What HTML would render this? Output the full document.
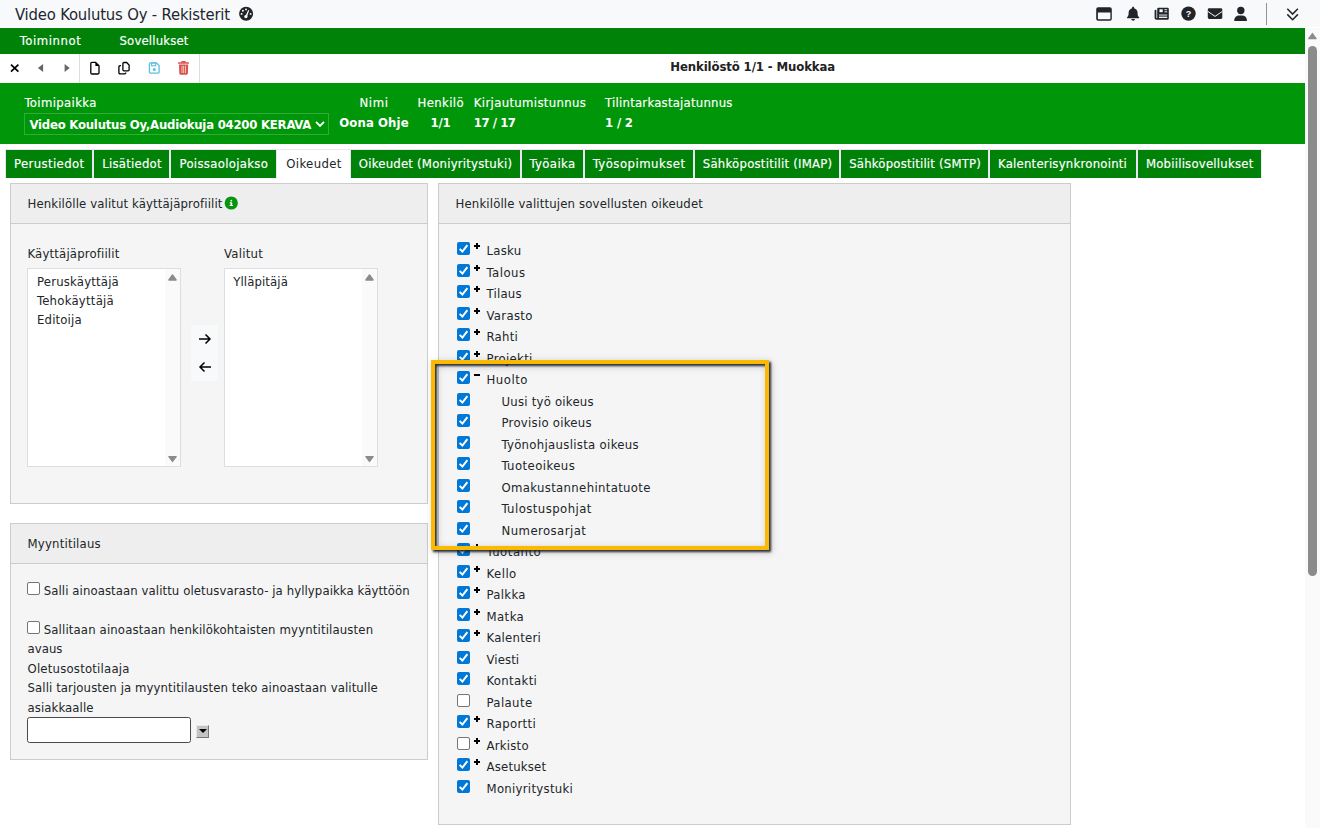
<!DOCTYPE html>
<html lang="fi">
<head>
<meta charset="utf-8">
<title>Video Koulutus Oy - Rekisterit</title>
<style>
*{box-sizing:border-box;margin:0;padding:0}
html,body{width:1320px;height:828px;overflow:hidden;background:#fff}
body{font-family:"DejaVu Sans Condensed","Liberation Sans",sans-serif;font-size:13px;color:#333;position:relative}
.a{position:absolute}
.t{position:absolute;white-space:nowrap;line-height:1}
#topbar{left:0;top:0;width:1320px;height:28px;background:#f8f9fa;border-bottom:1px solid #fff}
#menubar{left:0;top:28px;width:1305px;height:26px;background:#008209}
#toolbar{left:0;top:54px;width:1305px;height:29px;background:#fff}
.sep{position:absolute;top:54px;width:1px;height:29px;background:#dcdce4}
#infobar{left:0;top:83px;width:1305px;height:61px;background:#009609}
#sel{left:24px;top:113px;width:305px;height:22px;border:1px solid rgba(255,255,255,.2)}
.tab{position:absolute;top:150px;height:28px;background:#008209}
.tab.act{background:#fff}
#tabline{left:5px;top:149px;width:1257px;height:29px;background:#e9e6f1}
.panel{position:absolute;background:#f5f5f5;border:1px solid #ccc}
.phead{position:absolute;left:0;top:0;right:0;height:40px;background:#eee;border-bottom:1px solid #ccc}
.lb{position:absolute;background:#fff;border:1px solid #dcdee3}
.lbs{position:absolute;right:0;top:0;bottom:0;width:15px;background:#fafafa}
.tri-u{position:absolute;width:0;height:0;border-left:5px solid transparent;border-right:5px solid transparent;border-bottom:6px solid #8b8b8b}
.tri-d{position:absolute;width:0;height:0;border-left:5px solid transparent;border-right:5px solid transparent;border-top:6px solid #8b8b8b}
.cb{position:absolute;width:13px;height:13px;border-radius:2px}
.cb.on{background:#0078d7}
.cb.off{background:#fff;border:1px solid #767676}
.cb svg{position:absolute;left:0;top:0}
.pl{position:absolute;width:6px;height:6px}
.pl:before{content:"";position:absolute;left:0;top:2px;width:6px;height:2px;background:#000}
.pl.p:after{content:"";position:absolute;left:2px;top:0;width:2px;height:6px;background:#000}
#hl{left:431px;top:360px;width:338px;height:190px;border:4px solid #fbba00;filter:drop-shadow(2px 2px 1.2px rgba(25,30,45,.92)) drop-shadow(1px 1px 3px rgba(0,0,0,.18))}
#sbar{left:1305px;top:28px;width:15px;height:800px;background:#fafafa}
#sthumb{left:1308px;top:46px;width:9px;height:530px;border-radius:4.5px;background:#8b8b8b}
</style>
</head>
<body>
<div id="topbar" class="a"></div>
<div id="menubar" class="a"></div>
<div id="toolbar" class="a"></div>
<div class="sep" style="left:79px"></div><div class="sep" style="left:199px"></div>
<div id="infobar" class="a"></div>
<div id="sel" class="a"></div>
<div id="tabline" class="a"></div>
<div class="tab" style="left:6px;width:86px;height:28px"></div>
<div class="tab" style="left:94px;width:75px;height:28px"></div>
<div class="tab" style="left:171px;width:105px;height:28px"></div>
<div class="tab act" style="left:277px;width:73px;height:28px"></div>
<div class="tab" style="left:351px;width:169px;height:28px"></div>
<div class="tab" style="left:522px;width:61px;height:28px"></div>
<div class="tab" style="left:585px;width:108px;height:28px"></div>
<div class="tab" style="left:695px;width:144px;height:28px"></div>
<div class="tab" style="left:841px;width:147px;height:28px"></div>
<div class="tab" style="left:990px;width:146px;height:28px"></div>
<div class="tab" style="left:1138px;width:123px;height:28px"></div>
<div class="panel" style="left:10px;top:183px;width:418px;height:321px"><div class="phead"></div></div>
<div class="panel" style="left:10px;top:523px;width:418px;height:237px"><div class="phead"></div></div>
<div class="panel" style="left:438px;top:183px;width:633px;height:642px"><div class="phead"></div></div>
<div class="lb" style="left:27px;top:268px;width:154px;height:199px"><div class="lbs"></div></div><svg class="a" style="left:165.0px;top:270px" width="15" height="195" viewBox="0 0 15 195"><path d="M3.9 10 L7.5 5 L11.1 10Z M3.9 186.6 L7.5 191.4 L11.1 186.6Z" fill="#8b8b8b" stroke="#8b8b8b" stroke-width="1.4" stroke-linejoin="round"/></svg>
<div class="lb" style="left:224px;top:268px;width:154px;height:199px"><div class="lbs"></div></div><svg class="a" style="left:362.0px;top:270px" width="15" height="195" viewBox="0 0 15 195"><path d="M3.9 10 L7.5 5 L11.1 10Z M3.9 186.6 L7.5 191.4 L11.1 186.6Z" fill="#8b8b8b" stroke="#8b8b8b" stroke-width="1.4" stroke-linejoin="round"/></svg>
<div class="a" style="left:191px;top:325px;width:27px;height:56px;background:#f8f9fa"></div>
<svg class="a" style="left:198px;top:333px" width="14" height="12" viewBox="0 0 14 12"><path d="M1 6H12M7.5 1.5L12 6L7.5 10.5" fill="none" stroke="#000" stroke-width="1.5"/></svg>
<svg class="a" style="left:198px;top:361px" width="14" height="12" viewBox="0 0 14 12"><path d="M13 6H2M6.5 1.5L2 6L6.5 10.5" fill="none" stroke="#000" stroke-width="1.5"/></svg>
<svg class="a" style="left:224px;top:196px" width="15" height="15" viewBox="0 0 15 15"><circle cx="7.25" cy="7" r="6.6" fill="#05960f"/><rect x="6.5" y="6.3" width="1.7" height="3.4" fill="#fff"/><rect x="5.8" y="6.3" width="1.4" height="1" fill="#fff"/><rect x="5.6" y="9" width="3.4" height="1" fill="#fff"/><circle cx="7.3" cy="4.6" r=".95" fill="#fff"/></svg>
<div class="cb off" style="left:27px;top:582px"></div>
<div class="cb off" style="left:27px;top:621px"></div>
<div class="a" style="left:27px;top:717px;width:164px;height:26px;background:#fff;border:1px solid #4a4a4a;border-radius:2.5px"></div>
<div class="a" style="left:196px;top:725px;width:13px;height:13px;background:#c3c3c3;border:1px solid;border-color:#e8e8e8 #777 #777 #e8e8e8"><div class="a" style="left:1.5px;top:2.5px;width:0;height:0;border-left:4px solid transparent;border-right:4px solid transparent;border-top:4.5px solid #000"></div></div>
<div class="cb on" style="left:457px;top:242px"><svg width="13" height="13" viewBox="0 0 13 13"><path d="M2.7 6.9 L5.4 9.6 L10.4 3.1" fill="none" stroke="#fff" stroke-width="2" stroke-linecap="butt" stroke-linejoin="miter"/></svg></div>
<div class="pl p" style="left:474px;top:243px"></div>
<div class="cb on" style="left:457px;top:264px"><svg width="13" height="13" viewBox="0 0 13 13"><path d="M2.7 6.9 L5.4 9.6 L10.4 3.1" fill="none" stroke="#fff" stroke-width="2" stroke-linecap="butt" stroke-linejoin="miter"/></svg></div>
<div class="pl p" style="left:474px;top:265px"></div>
<div class="cb on" style="left:457px;top:285px"><svg width="13" height="13" viewBox="0 0 13 13"><path d="M2.7 6.9 L5.4 9.6 L10.4 3.1" fill="none" stroke="#fff" stroke-width="2" stroke-linecap="butt" stroke-linejoin="miter"/></svg></div>
<div class="pl p" style="left:474px;top:286px"></div>
<div class="cb on" style="left:457px;top:307px"><svg width="13" height="13" viewBox="0 0 13 13"><path d="M2.7 6.9 L5.4 9.6 L10.4 3.1" fill="none" stroke="#fff" stroke-width="2" stroke-linecap="butt" stroke-linejoin="miter"/></svg></div>
<div class="pl p" style="left:474px;top:308px"></div>
<div class="cb on" style="left:457px;top:328px"><svg width="13" height="13" viewBox="0 0 13 13"><path d="M2.7 6.9 L5.4 9.6 L10.4 3.1" fill="none" stroke="#fff" stroke-width="2" stroke-linecap="butt" stroke-linejoin="miter"/></svg></div>
<div class="pl p" style="left:474px;top:329px"></div>
<div class="cb on" style="left:457px;top:350px"><svg width="13" height="13" viewBox="0 0 13 13"><path d="M2.7 6.9 L5.4 9.6 L10.4 3.1" fill="none" stroke="#fff" stroke-width="2" stroke-linecap="butt" stroke-linejoin="miter"/></svg></div>
<div class="pl p" style="left:474px;top:351px"></div>
<div class="cb on" style="left:457px;top:371px"><svg width="13" height="13" viewBox="0 0 13 13"><path d="M2.7 6.9 L5.4 9.6 L10.4 3.1" fill="none" stroke="#fff" stroke-width="2" stroke-linecap="butt" stroke-linejoin="miter"/></svg></div>
<div class="pl" style="left:474px;top:372px"></div>
<div class="cb on" style="left:457px;top:393px"><svg width="13" height="13" viewBox="0 0 13 13"><path d="M2.7 6.9 L5.4 9.6 L10.4 3.1" fill="none" stroke="#fff" stroke-width="2" stroke-linecap="butt" stroke-linejoin="miter"/></svg></div>
<div class="cb on" style="left:457px;top:414px"><svg width="13" height="13" viewBox="0 0 13 13"><path d="M2.7 6.9 L5.4 9.6 L10.4 3.1" fill="none" stroke="#fff" stroke-width="2" stroke-linecap="butt" stroke-linejoin="miter"/></svg></div>
<div class="cb on" style="left:457px;top:436px"><svg width="13" height="13" viewBox="0 0 13 13"><path d="M2.7 6.9 L5.4 9.6 L10.4 3.1" fill="none" stroke="#fff" stroke-width="2" stroke-linecap="butt" stroke-linejoin="miter"/></svg></div>
<div class="cb on" style="left:457px;top:457px"><svg width="13" height="13" viewBox="0 0 13 13"><path d="M2.7 6.9 L5.4 9.6 L10.4 3.1" fill="none" stroke="#fff" stroke-width="2" stroke-linecap="butt" stroke-linejoin="miter"/></svg></div>
<div class="cb on" style="left:457px;top:479px"><svg width="13" height="13" viewBox="0 0 13 13"><path d="M2.7 6.9 L5.4 9.6 L10.4 3.1" fill="none" stroke="#fff" stroke-width="2" stroke-linecap="butt" stroke-linejoin="miter"/></svg></div>
<div class="cb on" style="left:457px;top:500px"><svg width="13" height="13" viewBox="0 0 13 13"><path d="M2.7 6.9 L5.4 9.6 L10.4 3.1" fill="none" stroke="#fff" stroke-width="2" stroke-linecap="butt" stroke-linejoin="miter"/></svg></div>
<div class="cb on" style="left:457px;top:522px"><svg width="13" height="13" viewBox="0 0 13 13"><path d="M2.7 6.9 L5.4 9.6 L10.4 3.1" fill="none" stroke="#fff" stroke-width="2" stroke-linecap="butt" stroke-linejoin="miter"/></svg></div>
<div class="cb on" style="left:457px;top:543px"><svg width="13" height="13" viewBox="0 0 13 13"><path d="M2.7 6.9 L5.4 9.6 L10.4 3.1" fill="none" stroke="#fff" stroke-width="2" stroke-linecap="butt" stroke-linejoin="miter"/></svg></div>
<div class="pl p" style="left:474px;top:544px"></div>
<div class="cb on" style="left:457px;top:565px"><svg width="13" height="13" viewBox="0 0 13 13"><path d="M2.7 6.9 L5.4 9.6 L10.4 3.1" fill="none" stroke="#fff" stroke-width="2" stroke-linecap="butt" stroke-linejoin="miter"/></svg></div>
<div class="pl p" style="left:474px;top:566px"></div>
<div class="cb on" style="left:457px;top:586px"><svg width="13" height="13" viewBox="0 0 13 13"><path d="M2.7 6.9 L5.4 9.6 L10.4 3.1" fill="none" stroke="#fff" stroke-width="2" stroke-linecap="butt" stroke-linejoin="miter"/></svg></div>
<div class="pl p" style="left:474px;top:587px"></div>
<div class="cb on" style="left:457px;top:608px"><svg width="13" height="13" viewBox="0 0 13 13"><path d="M2.7 6.9 L5.4 9.6 L10.4 3.1" fill="none" stroke="#fff" stroke-width="2" stroke-linecap="butt" stroke-linejoin="miter"/></svg></div>
<div class="pl p" style="left:474px;top:609px"></div>
<div class="cb on" style="left:457px;top:629px"><svg width="13" height="13" viewBox="0 0 13 13"><path d="M2.7 6.9 L5.4 9.6 L10.4 3.1" fill="none" stroke="#fff" stroke-width="2" stroke-linecap="butt" stroke-linejoin="miter"/></svg></div>
<div class="pl p" style="left:474px;top:630px"></div>
<div class="cb on" style="left:457px;top:651px"><svg width="13" height="13" viewBox="0 0 13 13"><path d="M2.7 6.9 L5.4 9.6 L10.4 3.1" fill="none" stroke="#fff" stroke-width="2" stroke-linecap="butt" stroke-linejoin="miter"/></svg></div>
<div class="cb on" style="left:457px;top:672px"><svg width="13" height="13" viewBox="0 0 13 13"><path d="M2.7 6.9 L5.4 9.6 L10.4 3.1" fill="none" stroke="#fff" stroke-width="2" stroke-linecap="butt" stroke-linejoin="miter"/></svg></div>
<div class="cb off" style="left:457px;top:694px"></div>
<div class="cb on" style="left:457px;top:715px"><svg width="13" height="13" viewBox="0 0 13 13"><path d="M2.7 6.9 L5.4 9.6 L10.4 3.1" fill="none" stroke="#fff" stroke-width="2" stroke-linecap="butt" stroke-linejoin="miter"/></svg></div>
<div class="pl p" style="left:474px;top:716px"></div>
<div class="cb off" style="left:457px;top:737px"></div>
<div class="pl p" style="left:474px;top:738px"></div>
<div class="cb on" style="left:457px;top:758px"><svg width="13" height="13" viewBox="0 0 13 13"><path d="M2.7 6.9 L5.4 9.6 L10.4 3.1" fill="none" stroke="#fff" stroke-width="2" stroke-linecap="butt" stroke-linejoin="miter"/></svg></div>
<div class="pl p" style="left:474px;top:759px"></div>
<div class="cb on" style="left:457px;top:780px"><svg width="13" height="13" viewBox="0 0 13 13"><path d="M2.7 6.9 L5.4 9.6 L10.4 3.1" fill="none" stroke="#fff" stroke-width="2" stroke-linecap="butt" stroke-linejoin="miter"/></svg></div>
<svg class="a" style="left:0;top:0" width="1320" height="84" viewBox="0 0 1320 84">
<!-- gauge -->
<g>
<circle cx="246.1" cy="13.7" r="7" fill="#212529"/>
<circle cx="241.6" cy="13.9" r=".95" fill="#fff"/><circle cx="242.9" cy="10.8" r=".95" fill="#fff"/><circle cx="246" cy="9.4" r=".95" fill="#fff"/><circle cx="250.6" cy="13.9" r=".95" fill="#fff"/>
<path d="M245.3 16.2 L248.3 10 L249.2 10.4 L246.8 16.9Z" fill="#fff"/><circle cx="245.9" cy="16.6" r="1.6" fill="#fff"/>
</g>
<!-- window -->
<path d="M1098.2 7.2 H1109.8 a2 2 0 0 1 2 2 V18.7 a2 2 0 0 1 -2 2 H1098.2 a2 2 0 0 1 -2 -2 V9.2 a2 2 0 0 1 2 -2Z M1097.9 12.5 V18.6 a.6 .6 0 0 0 .6 .6 H1109.8 a.6 .6 0 0 0 .6 -.6 V12.5Z" fill="#212529" fill-rule="evenodd"/>
<!-- bell -->
<g transform="translate(1127 6.8)" fill="#212529"><path d="M6.1 0 C6.7 0 7.1 .4 7.1 1 V1.4 C9.4 1.9 10.6 3.9 10.6 6 V7 C10.6 8.6 11.2 9.6 12 10.4 C12.5 10.9 12.2 11.4 11.6 11.4 H.6 C0 11.4 -.3 10.9 .2 10.4 C1 9.6 1.6 8.6 1.6 7 V6 C1.6 3.9 2.8 1.9 5.1 1.4 V1 C5.1 .4 5.5 0 6.1 0Z M4.3 12.3 H7.9 C7.9 13.3 7.1 14 6.1 14 C5.1 14 4.3 13.3 4.3 12.3Z"/></g>
<!-- newspaper -->
<g>
<path d="M1158.4 7.7 H1167.6 a1.2 1.2 0 0 1 1.2 1.2 V18.6 a1.2 1.2 0 0 1 -1.2 1.2 H1156.4 a1.8 1.8 0 0 1 -1.8 -1.8 V10.6 a.9 .9 0 0 1 1.8 0 V17.8 a.4 .4 0 0 0 .8 0 V8.9 a1.2 1.2 0 0 1 1.2 -1.2Z" fill="#212529"/>
<rect x="1159.5" y="9.3" width="3.2" height="2.9" fill="#fff"/><rect x="1164.4" y="9.3" width="2.8" height=".9" fill="#fff"/><rect x="1164.4" y="11.4" width="2.8" height=".9" fill="#fff"/>
<rect x="1159" y="14.1" width="8.2" height="2.1" fill="#8d9095"/><rect x="1159" y="16.7" width="8.2" height="1.2" fill="#fff"/>
</g>
<!-- question -->
<circle cx="1188.5" cy="13.6" r="7.2" fill="#212529"/>
<text x="1188.5" y="17.1" text-anchor="middle" font-family="Liberation Sans, sans-serif" font-weight="bold" font-size="9" fill="#fff">?</text>
<!-- envelope -->
<path d="M1209.2 8.3 H1220.9 a1.4 1.4 0 0 1 1.4 1.4 V17.5 a1.4 1.4 0 0 1 -1.4 1.4 H1209.2 a1.4 1.4 0 0 1 -1.4 -1.4 V9.7 a1.4 1.4 0 0 1 1.4 -1.4Z" fill="#212529"/>
<path d="M1207.8 11.4 L1215.05 16.4 L1222.3 11.4" fill="none" stroke="#f8f9fa" stroke-width="1"/>
<!-- user -->
<circle cx="1240.8" cy="10.5" r="3.7" fill="#212529"/>
<path d="M1234.3 21 V20.2 C1234.3 17.4 1236.6 15.6 1239.2 15.6 H1242.2 C1244.8 15.6 1246.9 17.4 1246.9 20.2 V21 Z" fill="#212529"/>
<!-- separator -->
<rect x="1266" y="3" width="1" height="22" fill="#8e939b"/>
<!-- double chevron -->
<path d="M1287.3 8.8 L1292.6 14.1 L1297.9 8.8 M1287.3 14.4 L1292.6 19.7 L1297.9 14.4" fill="none" stroke="#212529" stroke-width="1.5"/>
<!-- toolbar: X -->
<path d="M11 64.6 L18.4 71.6 M18.4 64.6 L11 71.6" stroke="#000" stroke-width="1.7" fill="none"/>
<path d="M37.9 68 L43.1 63.9 V72.1Z" fill="#666"/>
<path d="M69.7 68 L64.6 63.9 V72.1Z" fill="#666"/>
<!-- file -->
<path d="M92 62.4 H95.6 L99 65.8 V72.8 a1.2 1.2 0 0 1 -1.2 1.2 H92 a1.2 1.2 0 0 1 -1.2 -1.2 V63.6 a1.2 1.2 0 0 1 1.2 -1.2Z" fill="none" stroke="#000" stroke-width="1.3"/>
<path d="M95.4 62 L99.4 66 H95.4Z" fill="#000"/>
<!-- copy -->
<path d="M124 62.5 H126.6 L129.1 65 V69.8 a1.1 1.1 0 0 1 -1.1 1.1 H124 a1.1 1.1 0 0 1 -1.1 -1.1 V63.6 a1.1 1.1 0 0 1 1.1 -1.1Z" fill="none" stroke="#000" stroke-width="1.3"/>
<path d="M121 65.6 H120 a1.1 1.1 0 0 0 -1.1 1.1 V72.7 a1.1 1.1 0 0 0 1.1 1.1 H124.7 a1.1 1.1 0 0 0 1.1 -1.1 V72.6" fill="none" stroke="#000" stroke-width="1.3"/>
<!-- save -->
<path d="M150.6 62.9 H156.4 L159.1 65.6 V72 a1.2 1.2 0 0 1 -1.2 1.2 H150.6 a1.2 1.2 0 0 1 -1.2 -1.2 V64.1 a1.2 1.2 0 0 1 1.2 -1.2Z" fill="none" stroke="#5bc0de" stroke-width="1.3"/>
<rect x="151.6" y="63" width="4.2" height="2.8" fill="none" stroke="#5bc0de" stroke-width="1.1"/>
<circle cx="154.3" cy="69.6" r="1.5" fill="#5bc0de"/>
<!-- trash -->
<g fill="#d9534f"><rect x="178" y="62.2" width="11" height="1.6" rx=".5"/><rect x="181.3" y="61.1" width="4.4" height="1.6" rx=".6"/>
<path d="M179 64.6 H188.2 L187.9 73.6 a1.2 1.2 0 0 1 -1.2 1.1 H180.5 a1.2 1.2 0 0 1 -1.2 -1.1Z"/></g>
<g fill="#fbe3c8"><rect x="181.6" y="65.8" width=".8" height="7.2"/><rect x="183.3" y="65.8" width=".8" height="7.2"/><rect x="185" y="65.8" width=".8" height="7.2"/></g>
</svg>
<svg class="a" style="left:312px;top:118px" width="16" height="12" viewBox="312 118 16 12"><path d="M316 121.8 L320 125.9 L324 121.8" fill="none" stroke="#fff" stroke-width="1.8"/></svg>

<div class="t" style="left:15.0px;top:7.0px;font-size:16.5px;color:#212631;letter-spacing:-0.18px">Video Koulutus Oy - Rekisterit</div>
<div class="t" style="left:19.8px;top:34.0px;font-size:13px;color:#fff;letter-spacing:0.55px;-webkit-text-stroke:.16px #fff">Toiminnot</div>
<div class="t" style="left:119.5px;top:34.0px;font-size:13px;color:#fff;letter-spacing:0.16px;-webkit-text-stroke:.16px #fff">Sovellukset</div>
<div class="t" style="left:670.3px;top:59.7px;font-size:13px;color:#222;letter-spacing:-0.11px;font-weight:bold">Henkilöstö 1/1 - Muokkaa</div>
<div class="t" style="left:24.5px;top:96.0px;font-size:13px;color:#fff;letter-spacing:0.36px;-webkit-text-stroke:.16px #fff">Toimipaikka</div>
<div class="t" style="left:29.5px;top:118.0px;font-size:13px;color:#fff;letter-spacing:-0.23px;font-weight:bold">Video Koulutus Oy,Audiokuja 04200 KERAVA</div>
<div class="t" style="left:359.5px;top:96.0px;font-size:13px;color:#fff;letter-spacing:0.59px;-webkit-text-stroke:.16px #fff">Nimi</div>
<div class="t" style="left:339.3px;top:116.0px;font-size:13px;color:#fff;letter-spacing:0.10px;font-weight:bold">Oona Ohje</div>
<div class="t" style="left:417.5px;top:96.0px;font-size:13px;color:#fff;letter-spacing:0.38px;-webkit-text-stroke:.16px #fff">Henkilö</div>
<div class="t" style="left:430.5px;top:116.0px;font-size:13px;color:#fff;letter-spacing:-0.19px;font-weight:bold">1/1</div>
<div class="t" style="left:473.8px;top:96.0px;font-size:13px;color:#fff;letter-spacing:0.34px;-webkit-text-stroke:.16px #fff">Kirjautumistunnus</div>
<div class="t" style="left:473.8px;top:116.0px;font-size:13px;color:#fff;letter-spacing:-0.47px;font-weight:bold">17 / 17</div>
<div class="t" style="left:605.1px;top:96.0px;font-size:13px;color:#fff;letter-spacing:0.23px;-webkit-text-stroke:.16px #fff">Tilintarkastajatunnus</div>
<div class="t" style="left:605.1px;top:116.0px;font-size:13px;color:#fff;letter-spacing:-0.20px;font-weight:bold">1 / 2</div>
<div class="t" style="left:14.0px;top:157.0px;font-size:13px;color:#fff;letter-spacing:0.38px;-webkit-text-stroke:.16px #fff">Perustiedot</div>
<div class="t" style="left:102.2px;top:157.0px;font-size:13px;color:#fff;letter-spacing:0.24px;-webkit-text-stroke:.16px #fff">Lisätiedot</div>
<div class="t" style="left:179.5px;top:157.0px;font-size:13px;color:#fff;letter-spacing:0.31px;-webkit-text-stroke:.16px #fff">Poissaolojakso</div>
<div class="t" style="left:286.2px;top:157.0px;font-size:13px;color:#212529;letter-spacing:0.38px">Oikeudet</div>
<div class="t" style="left:358.8px;top:157.0px;font-size:13px;color:#fff;letter-spacing:0.22px;-webkit-text-stroke:.16px #fff">Oikeudet (Moniyritystuki)</div>
<div class="t" style="left:529.5px;top:157.0px;font-size:13px;color:#fff;letter-spacing:0.38px;-webkit-text-stroke:.16px #fff">Työaika</div>
<div class="t" style="left:592.7px;top:157.0px;font-size:13px;color:#fff;letter-spacing:0.48px;-webkit-text-stroke:.16px #fff">Työsopimukset</div>
<div class="t" style="left:702.8px;top:157.0px;font-size:13px;color:#fff;letter-spacing:0.24px;-webkit-text-stroke:.16px #fff">Sähköpostitilit (IMAP)</div>
<div class="t" style="left:849.2px;top:157.0px;font-size:13px;color:#fff;letter-spacing:0.20px;-webkit-text-stroke:.16px #fff">Sähköpostitilit (SMTP)</div>
<div class="t" style="left:998.0px;top:157.0px;font-size:13px;color:#fff;letter-spacing:0.23px;-webkit-text-stroke:.16px #fff">Kalenterisynkronointi</div>
<div class="t" style="left:1145.9px;top:157.0px;font-size:13px;color:#fff;letter-spacing:0.22px;-webkit-text-stroke:.16px #fff">Mobiilisovellukset</div>
<div class="t" style="left:27.5px;top:197.0px;font-size:13px;color:#212529;letter-spacing:0.13px">Henkilölle valitut käyttäjäprofiilit</div>
<div class="t" style="left:27.5px;top:247.0px;font-size:13px;color:#212529;letter-spacing:0.17px">Käyttäjäprofiilit</div>
<div class="t" style="left:224.0px;top:247.0px;font-size:13px;color:#212529;letter-spacing:0.25px">Valitut</div>
<div class="t" style="left:37.0px;top:275.0px;font-size:13px;color:#212529;letter-spacing:0.19px">Peruskäyttäjä</div>
<div class="t" style="left:37.0px;top:294.0px;font-size:13px;color:#212529;letter-spacing:0.24px">Tehokäyttäjä</div>
<div class="t" style="left:37.0px;top:313.0px;font-size:13px;color:#212529;letter-spacing:0.16px">Editoija</div>
<div class="t" style="left:233.2px;top:275.0px;font-size:13px;color:#212529;letter-spacing:0.11px">Ylläpitäjä</div>
<div class="t" style="left:27.5px;top:537.0px;font-size:13px;color:#212529;letter-spacing:0.20px">Myyntitilaus</div>
<div class="t" style="left:43.7px;top:584.0px;font-size:13px;color:#212529;letter-spacing:0.09px">Salli ainoastaan valittu oletusvarasto- ja hyllypaikka käyttöön</div>
<div class="t" style="left:43.7px;top:623.0px;font-size:13px;color:#212529;letter-spacing:0.15px">Sallitaan ainoastaan henkilökohtaisten myyntitilausten</div>
<div class="t" style="left:27.5px;top:642.0px;font-size:13px;color:#212529;letter-spacing:0.05px">avaus</div>
<div class="t" style="left:27.5px;top:661.5px;font-size:13px;color:#212529;letter-spacing:0.21px">Oletusostotilaaja</div>
<div class="t" style="left:27.5px;top:681.0px;font-size:13px;color:#212529;letter-spacing:0.10px">Salli tarjousten ja myyntitilausten teko ainoastaan valitulle</div>
<div class="t" style="left:27.5px;top:700.7px;font-size:13px;color:#212529;letter-spacing:0.09px">asiakkaalle</div>
<div class="t" style="left:455.5px;top:197.0px;font-size:13px;color:#212529;letter-spacing:0.16px">Henkilölle valittujen sovellusten oikeudet</div>
<div class="t" style="left:486.5px;top:244.0px;font-size:13px;color:#212529;letter-spacing:0.25px">Lasku</div>
<div class="t" style="left:486.5px;top:265.5px;font-size:13px;color:#212529;letter-spacing:0.49px">Talous</div>
<div class="t" style="left:486.5px;top:287.0px;font-size:13px;color:#212529;letter-spacing:0.23px">Tilaus</div>
<div class="t" style="left:486.5px;top:308.5px;font-size:13px;color:#212529;letter-spacing:0.32px">Varasto</div>
<div class="t" style="left:486.5px;top:330.0px;font-size:13px;color:#212529;letter-spacing:0.25px">Rahti</div>
<div class="t" style="left:486.5px;top:351.5px;font-size:13px;color:#212529;letter-spacing:0.33px">Projekti</div>
<div class="t" style="left:486.5px;top:373.0px;font-size:13px;color:#212529;letter-spacing:0.52px">Huolto</div>
<div class="t" style="left:501.5px;top:394.5px;font-size:13px;color:#212529;letter-spacing:0.23px">Uusi työ oikeus</div>
<div class="t" style="left:501.5px;top:416.0px;font-size:13px;color:#212529;letter-spacing:0.27px">Provisio oikeus</div>
<div class="t" style="left:501.5px;top:437.5px;font-size:13px;color:#212529;letter-spacing:0.31px">Työnohjauslista oikeus</div>
<div class="t" style="left:501.5px;top:459.0px;font-size:13px;color:#212529;letter-spacing:0.43px">Tuoteoikeus</div>
<div class="t" style="left:501.5px;top:480.5px;font-size:13px;color:#212529;letter-spacing:0.34px">Omakustannehintatuote</div>
<div class="t" style="left:501.5px;top:502.0px;font-size:13px;color:#212529;letter-spacing:0.44px">Tulostuspohjat</div>
<div class="t" style="left:501.5px;top:523.5px;font-size:13px;color:#212529;letter-spacing:0.44px">Numerosarjat</div>
<div class="t" style="left:486.5px;top:545.0px;font-size:13px;color:#212529;letter-spacing:0.52px">Tuotanto</div>
<div class="t" style="left:486.5px;top:566.5px;font-size:13px;color:#212529;letter-spacing:0.47px">Kello</div>
<div class="t" style="left:486.5px;top:588.0px;font-size:13px;color:#212529;letter-spacing:0.32px">Palkka</div>
<div class="t" style="left:486.5px;top:609.5px;font-size:13px;color:#212529;letter-spacing:0.43px">Matka</div>
<div class="t" style="left:486.5px;top:631.0px;font-size:13px;color:#212529;letter-spacing:0.24px">Kalenteri</div>
<div class="t" style="left:486.5px;top:652.5px;font-size:13px;color:#212529;letter-spacing:0.10px">Viesti</div>
<div class="t" style="left:486.5px;top:674.0px;font-size:13px;color:#212529;letter-spacing:0.34px">Kontakti</div>
<div class="t" style="left:486.5px;top:695.5px;font-size:13px;color:#212529;letter-spacing:0.39px">Palaute</div>
<div class="t" style="left:486.5px;top:717.0px;font-size:13px;color:#212529;letter-spacing:0.34px">Raportti</div>
<div class="t" style="left:486.5px;top:738.5px;font-size:13px;color:#212529;letter-spacing:0.23px">Arkisto</div>
<div class="t" style="left:486.5px;top:760.0px;font-size:13px;color:#212529;letter-spacing:0.20px">Asetukset</div>
<div class="t" style="left:486.5px;top:781.5px;font-size:13px;color:#212529;letter-spacing:0.29px">Moniyritystuki</div>
<div id="hl" class="a"></div>
<div id="sbar" class="a"></div><svg class="a" style="left:1305px;top:30px" width="15" height="12" viewBox="1305 30 15 12"><path d="M1308.7 38.7 L1312.4 33.5 L1316.1 38.7Z" fill="#8b8b8b" stroke="#8b8b8b" stroke-width="1.2" stroke-linejoin="round"/></svg><div id="sthumb" class="a"></div>
</body>
</html>
